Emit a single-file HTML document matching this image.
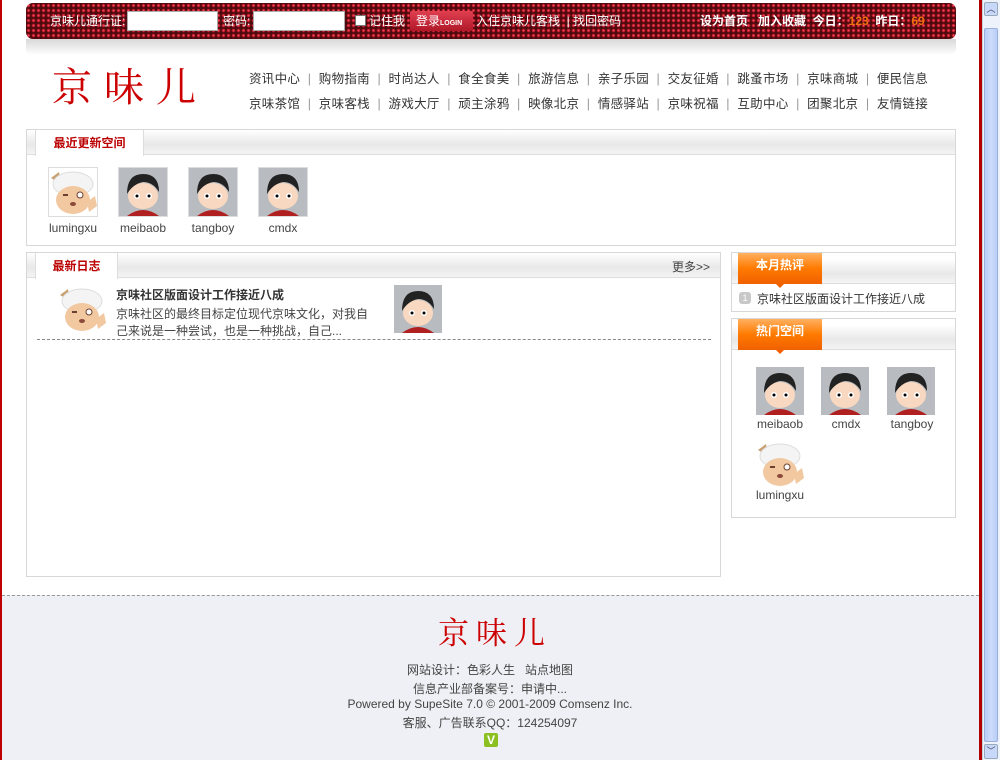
<!DOCTYPE html>
<html><head><meta charset="utf-8">
<style>
*{margin:0;padding:0;box-sizing:border-box}
body{width:1003px;height:776px;position:relative;background:#fff;font:12px "Liberation Sans","Noto Sans CJK SC",sans-serif;color:#333;overflow:hidden}
.a{position:absolute;white-space:nowrap}
.topbar{left:26px;top:3px;width:930px;height:36px;border-radius:7px;background-color:#4a0a0e;
background-image:radial-gradient(circle,#ff6070 0,#c01828 1.3px,transparent 2.2px);background-size:5px 5px}
.shadow{left:26px;top:39px;width:930px;height:16px;background:linear-gradient(#d8d8d8,#fff);border-radius:0 0 6px 6px}
.tb{color:#fff;font-size:12px;top:12px}
.inp{background:#fff;height:20px;border:1px solid #aaa;top:11px}
.nav{font-size:12.5px;color:#333;letter-spacing:0.3px}
.nav span{color:#999;margin:0 7.5px}
.panel{border:1px solid #d8d8d8;background:#fff}
.hd{left:0;top:0;right:0;height:25px;background:linear-gradient(#fff,#e8e8e8 60%,#f4f4f4);border-bottom:1px solid #ddd}
.tab{top:0;height:26px;background:#fff;border-left:1px solid #ddd;border-right:1px solid #ddd;color:#b00;font-weight:bold;font-size:12px;line-height:26px;text-align:center}
.otab{top:0;width:84px;height:31px;background:linear-gradient(#ffb060,#ff7a00 50%,#f06000);color:#fff;font-weight:bold;font-size:12px;line-height:24px;text-align:center}
.otab:after{content:"";position:absolute;left:38px;bottom:-4px;border:4px solid transparent;border-bottom:0;border-top-color:#f06000}
.nm{font-size:12px;color:#444;text-align:center;width:60px}
.logo{font-family:"Noto Serif CJK SC",serif;color:#c00}
.ft{font-size:12px;color:#444;left:0;width:980px;text-align:center}
</style></head><body>
<svg width="0" height="0" style="position:absolute">
<defs>
<symbol id="girl" viewBox="0 0 48 48"><rect width="48" height="48" fill="#b8bcc0"/><path d="M8 48 Q24 36 40 48Z" fill="#b02020"/><ellipse cx="24" cy="28" rx="15" ry="13" fill="#f8d8c0"/><path d="M8 26 Q8 6 24 6 Q40 6 40 24 Q34 14 24 14 Q14 16 8 26Z" fill="#222"/><circle cx="18" cy="28" r="3" fill="#fff"/><circle cx="30" cy="28" r="3" fill="#fff"/><circle cx="18" cy="28" r="1.5" fill="#000"/><circle cx="30" cy="28" r="1.5" fill="#000"/></symbol>
<symbol id="sheep" viewBox="0 0 48 48"><rect width="48" height="48" fill="#fff"/><path d="M2 10 L10 4 L12 16Z" fill="#c9a070"/><ellipse cx="24" cy="16" rx="20" ry="12" fill="#f4f4f4" stroke="#ddd"/><ellipse cx="24" cy="32" rx="17" ry="14" fill="#f2c8a0"/><circle cx="31" cy="27" r="3" fill="#fff" stroke="#6a4030"/><path d="M14 27 h5" stroke="#6a4030" stroke-width="2"/><ellipse cx="24" cy="36" rx="3" ry="2" fill="#8a4a3a"/><path d="M38 34 l8 -6 l2 10 l-8 6Z" fill="#f2c8a0"/></symbol>
</defs></svg>

<div class="a" style="left:0;top:0;width:2px;height:760px;background:#c00000"></div>
<div class="a" style="left:979px;top:0;width:3px;height:760px;background:#b00000"></div>
<div class="a" style="left:982px;top:0;width:18px;height:760px;background:#eef2fa;border-left:1px solid #c8d0e0"></div>
<div class="a" style="left:984px;top:2px;width:14px;height:14px;background:#c8d8f8;border:1px solid #9ab;border-radius:2px;font-size:9px;color:#446;text-align:center;line-height:12px">︿</div>
<div class="a" style="left:984px;top:28px;width:14px;height:714px;background:linear-gradient(90deg,#b8cdf6,#cddcfb,#b8cdf6);border:1px solid #9ab0dd;border-radius:2px"></div>
<div class="a" style="left:984px;top:744px;width:14px;height:15px;background:#c8d8f8;border:1px solid #9ab;border-radius:2px;font-size:9px;color:#446;text-align:center;line-height:13px">﹀</div>

<div class="a topbar"></div>
<div class="a shadow"></div>
<div class="a tb" style="left:50px">京味儿通行证:</div>
<div class="a inp" style="left:127px;width:91px"></div>
<div class="a tb" style="left:223px">密码:</div>
<div class="a inp" style="left:253px;width:92px"></div>
<div class="a" style="left:355px;top:15px;width:11px;height:11px;background:#fff;border:1px solid #777"></div>
<div class="a tb" style="left:369px">记住我</div>
<div class="a" style="left:410px;top:11px;width:63px;height:20px;background:linear-gradient(#e04050,#b01828);border-radius:2px;color:#fff;font-size:12px;line-height:20px;padding-left:6px">登录<span style="font-size:7px;font-weight:bold">LOGIN</span></div>
<div class="a tb" style="left:476px">入住京味儿客栈 &nbsp;| 找回密码</div>
<div class="a tb" style="left:700px;font-weight:bold">设为首页 &nbsp; 加入收藏 &nbsp;今日：<span style="color:#f07010">123</span> &nbsp;昨日：<span style="color:#f07010">69</span></div>

<div class="a logo" style="left:52px;top:58px;font-size:40px;line-height:54px;letter-spacing:12px">京味儿</div>
<div class="a nav" style="left:249px;top:68px">资讯中心<span>|</span>购物指南<span>|</span>时尚达人<span>|</span>食全食美<span>|</span>旅游信息<span>|</span>亲子乐园<span>|</span>交友征婚<span>|</span>跳蚤市场<span>|</span>京味商城<span>|</span>便民信息</div>
<div class="a nav" style="left:249px;top:93px">京味茶馆<span>|</span>京味客栈<span>|</span>游戏大厅<span>|</span>顽主涂鸦<span>|</span>映像北京<span>|</span>情感驿站<span>|</span>京味祝福<span>|</span>互助中心<span>|</span>团聚北京<span>|</span>友情链接</div>

<div class="a panel" style="left:26px;top:129px;width:930px;height:117px">
 <div class="a hd"></div>
 <div class="a tab" style="left:8px;width:109px">最近更新空间</div>
 <svg class="a" style="left:21px;top:37px;border:1px solid #ddd" width="50" height="50"><use href="#sheep"/></svg>
 <svg class="a" style="left:91px;top:37px;border:1px solid #ddd" width="50" height="50"><use href="#girl"/></svg>
 <svg class="a" style="left:161px;top:37px;border:1px solid #ddd" width="50" height="50"><use href="#girl"/></svg>
 <svg class="a" style="left:231px;top:37px;border:1px solid #ddd" width="50" height="50"><use href="#girl"/></svg>
 <div class="a nm" style="left:16px;top:91px">lumingxu</div>
 <div class="a nm" style="left:86px;top:91px">meibaob</div>
 <div class="a nm" style="left:156px;top:91px">tangboy</div>
 <div class="a nm" style="left:226px;top:91px">cmdx</div>
</div>

<div class="a panel" style="left:26px;top:252px;width:695px;height:325px">
 <div class="a hd"></div>
 <div class="a tab" style="left:8px;width:83px">最新日志</div>
 <div class="a" style="left:645px;top:5px;color:#444">更多&gt;&gt;</div>
 <svg class="a" style="left:31px;top:32px" width="48" height="48"><use href="#sheep"/></svg>
 <div class="a" style="left:89px;top:33px;font-weight:bold;color:#333">京味社区版面设计工作接近八成</div>
 <div class="a" style="left:89px;top:52px;color:#444">京味社区的最终目标定位现代京味文化，对我自</div>
 <div class="a" style="left:89px;top:69px;color:#444">己来说是一种尝试，也是一种挑战，自己...</div>
 <svg class="a" style="left:367px;top:32px" width="48" height="48"><use href="#girl"/></svg>
 <div class="a" style="left:10px;top:86px;width:674px;border-top:1px dashed #888"></div>
</div>

<div class="a panel" style="left:731px;top:252px;width:225px;height:60px">
 <div class="a hd" style="top:6px"></div>
 <div class="a otab" style="left:6px">本月热评</div>
 <div class="a" style="left:7px;top:39px;width:12px;height:12px;background:#c8c8c8;border-radius:3px;color:#fff;font-size:9px;text-align:center;line-height:12px">1</div>
 <div class="a" style="left:25px;top:37px;color:#333">京味社区版面设计工作接近八成</div>
</div>
<div class="a panel" style="left:731px;top:318px;width:225px;height:200px">
 <div class="a hd" style="top:6px"></div>
 <div class="a otab" style="left:6px">热门空间</div>
 <svg class="a" style="left:24px;top:48px" width="48" height="48"><use href="#girl"/></svg>
 <svg class="a" style="left:89px;top:48px" width="48" height="48"><use href="#girl"/></svg>
 <svg class="a" style="left:155px;top:48px" width="48" height="48"><use href="#girl"/></svg>
 <svg class="a" style="left:24px;top:121px" width="48" height="48"><use href="#sheep"/></svg>
 <div class="a nm" style="left:18px;top:98px">meibaob</div>
 <div class="a nm" style="left:84px;top:98px">cmdx</div>
 <div class="a nm" style="left:150px;top:98px">tangboy</div>
 <div class="a nm" style="left:18px;top:169px">lumingxu</div>
</div>

<div class="a" style="left:2px;top:595px;width:977px;height:165px;background:#eef0f5;border-top:1px dashed #999"></div>
<div class="a logo" style="left:438px;top:610px;font-size:31px;line-height:42px;letter-spacing:7px">京味儿</div>
<div class="a ft" style="top:661px">网站设计：色彩人生 &nbsp; 站点地图</div>
<div class="a ft" style="top:680px">信息产业部备案号：申请中...</div>
<div class="a ft" style="top:697px">Powered by SupeSite 7.0 © 2001-2009 Comsenz Inc.</div>
<div class="a ft" style="top:714px">客服、广告联系QQ：124254097</div>
<div class="a" style="left:484px;top:733px;width:14px;height:14px;background:#8cc020;border-radius:2px;color:#fff;font-weight:bold;font-size:12px;text-align:center;line-height:14px">V</div>
</body></html>
